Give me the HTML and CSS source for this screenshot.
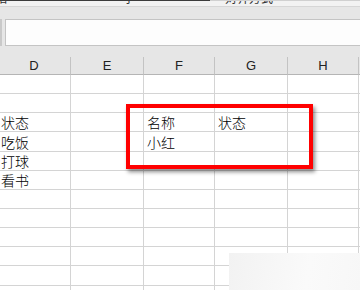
FILE: index.html
```html
<!doctype html>
<html>
    <head>
        <meta charset="utf-8" />
        <title>表格</title>
        <link rel="stylesheet" href="styles.css">
    </head>
    <body>
        <!-- Ribbon, cut off at the top -->
        <div class="ribbon">
            <div class="ribbon-line">
                <span class="ribbon-dark"></span>
            </div>
            <div class="ribbon-labels">
                <span class="ribbon-label label-a">粘</span>
                <span class="ribbon-label label-b">字</span>
                <span class="ribbon-label label-c">对齐方式</span>
            </div>
        </div>

        <!-- Formula bar -->
        <div class="formula-bar">
            <span class="formula-edge"></span>
            <div class="formula-input"></div>
        </div>

        <!-- Sheet -->
        <div class="sheet">
            <div class="grid">
                <div class="col-head">D</div>
                <div class="col-head">E</div>
                <div class="col-head">F</div>
                <div class="col-head">G</div>
                <div class="col-head">H</div>
                <div class="col-head"></div>

                <div class="cell"></div><div class="cell"></div><div class="cell"></div><div class="cell"></div><div class="cell"></div><div class="cell"></div>
                <div class="cell"></div><div class="cell"></div><div class="cell"></div><div class="cell"></div><div class="cell"></div><div class="cell"></div>
                <div class="cell">状态</div><div class="cell"></div><div class="cell">名称</div><div class="cell">状态</div><div class="cell"></div><div class="cell"></div>
                <div class="cell">吃饭</div><div class="cell"></div><div class="cell">小红</div><div class="cell"></div><div class="cell"></div><div class="cell"></div>
                <div class="cell">打球</div><div class="cell"></div><div class="cell"></div><div class="cell"></div><div class="cell"></div><div class="cell"></div>
                <div class="cell">看书</div><div class="cell"></div><div class="cell"></div><div class="cell"></div><div class="cell"></div><div class="cell"></div>
                <div class="cell"></div><div class="cell"></div><div class="cell"></div><div class="cell"></div><div class="cell"></div><div class="cell"></div>
                <div class="cell"></div><div class="cell"></div><div class="cell"></div><div class="cell"></div><div class="cell"></div><div class="cell"></div>
                <div class="cell"></div><div class="cell"></div><div class="cell"></div><div class="cell"></div><div class="cell"></div><div class="cell"></div>
                <div class="cell"></div><div class="cell"></div><div class="cell"></div><div class="cell"></div><div class="cell"></div><div class="cell"></div>
                <div class="cell"></div><div class="cell"></div><div class="cell"></div><div class="cell"></div><div class="cell"></div><div class="cell"></div>
                <div class="cell"></div><div class="cell"></div><div class="cell"></div><div class="cell"></div><div class="cell"></div><div class="cell"></div>
            </div>

            <!-- Red highlight drawn over the cells -->
            <div class="highlight"></div>
            <!-- Faded corner -->
            <div class="corner-fade"></div>
        </div>
    </body>
</html>
```

FILE: styles.css
```css
html,
body {
    margin: 0;
    padding: 0;
    overflow: hidden;
    background: #ffffff;
    font-family: "Liberation Sans", "Noto Sans CJK SC", sans-serif;
}

body {
    width: 360px;
    height: 290px;
}

.ribbon {
    height: 7px;
    background: #f2f2f2;
    border-bottom: 1px solid #d6d6d6;
    box-sizing: border-box;
    overflow: hidden;
}

.ribbon-line {
    height: 1px;
    background: #d0d0d0;
}

.ribbon-dark {
    display: block;
    width: 210px;
    height: 1px;
    background: #3c3c3c;
}

.ribbon-labels {
    position: relative;
    height: 5px;
    overflow: hidden;
}

.ribbon-label {
    position: absolute;
    top: -9px;
    font-family: "Noto Sans CJK SC", sans-serif;
    font-size: 12px;
    line-height: 12px;
    color: #333;
}

.label-a { left: -5px; }
.label-b { left: 123px; }
.label-c { left: 225px; }

.formula-bar {
    display: flex;
    align-items: center;
    gap: 3px;
    height: 50px;
    background: #e6e6e6;
    padding: 12px 0 11px;
    box-sizing: border-box;
}

.formula-edge {
    width: 2px;
    height: 27px;
    background: #c9c9c9;
}

.formula-input {
    flex: 1;
    height: 27px;
    box-sizing: border-box;
    background: #fdfdfd;
    border: 1px solid #c4c4c4;
    border-right: none;
}

.sheet {
    position: relative;
    height: 233px;
    overflow: hidden;
}

.grid {
    display: grid;
    grid-template-columns: 73px 73px 71px 73px 71px 1fr;
    grid-template-rows: 18px;
    grid-auto-rows: 19.15px;
    margin-left: -2px;
}

.col-head {
    background: #e6e6e6;
    border-right: 1px solid #c3c3c3;
    border-bottom: 1px solid #b5b5b5;
    display: flex;
    align-items: flex-end;
    justify-content: center;
    font-size: 13px;
    line-height: 14px;
    color: #222;
    padding-bottom: 1px;
    box-sizing: border-box;
}

.cell {
    border-right: 1px solid #d4d4d4;
    border-bottom: 1px solid #d4d4d4;
    box-sizing: border-box;
    display: flex;
    align-items: flex-end;
    padding: 0 0 1px 3px;
    font-family: "Noto Sans CJK SC", sans-serif;
    font-size: 14px;
    font-weight: 300;
    line-height: 16px;
    color: #000;
    white-space: nowrap;
}

.highlight {
    position: absolute;
    left: 126px;
    top: 47px;
    width: 187px;
    height: 65px;
    box-sizing: border-box;
    border: 4px solid #ff0000;
    box-shadow: 2px 3px 4px rgba(0, 0, 0, 0.45);
}

.corner-fade {
    position: absolute;
    left: 229px;
    top: 196px;
    right: 0;
    bottom: 0;
    background: linear-gradient(100deg, #f2f2f2, #fafafa 60%, #f7f7f7);
}
```
